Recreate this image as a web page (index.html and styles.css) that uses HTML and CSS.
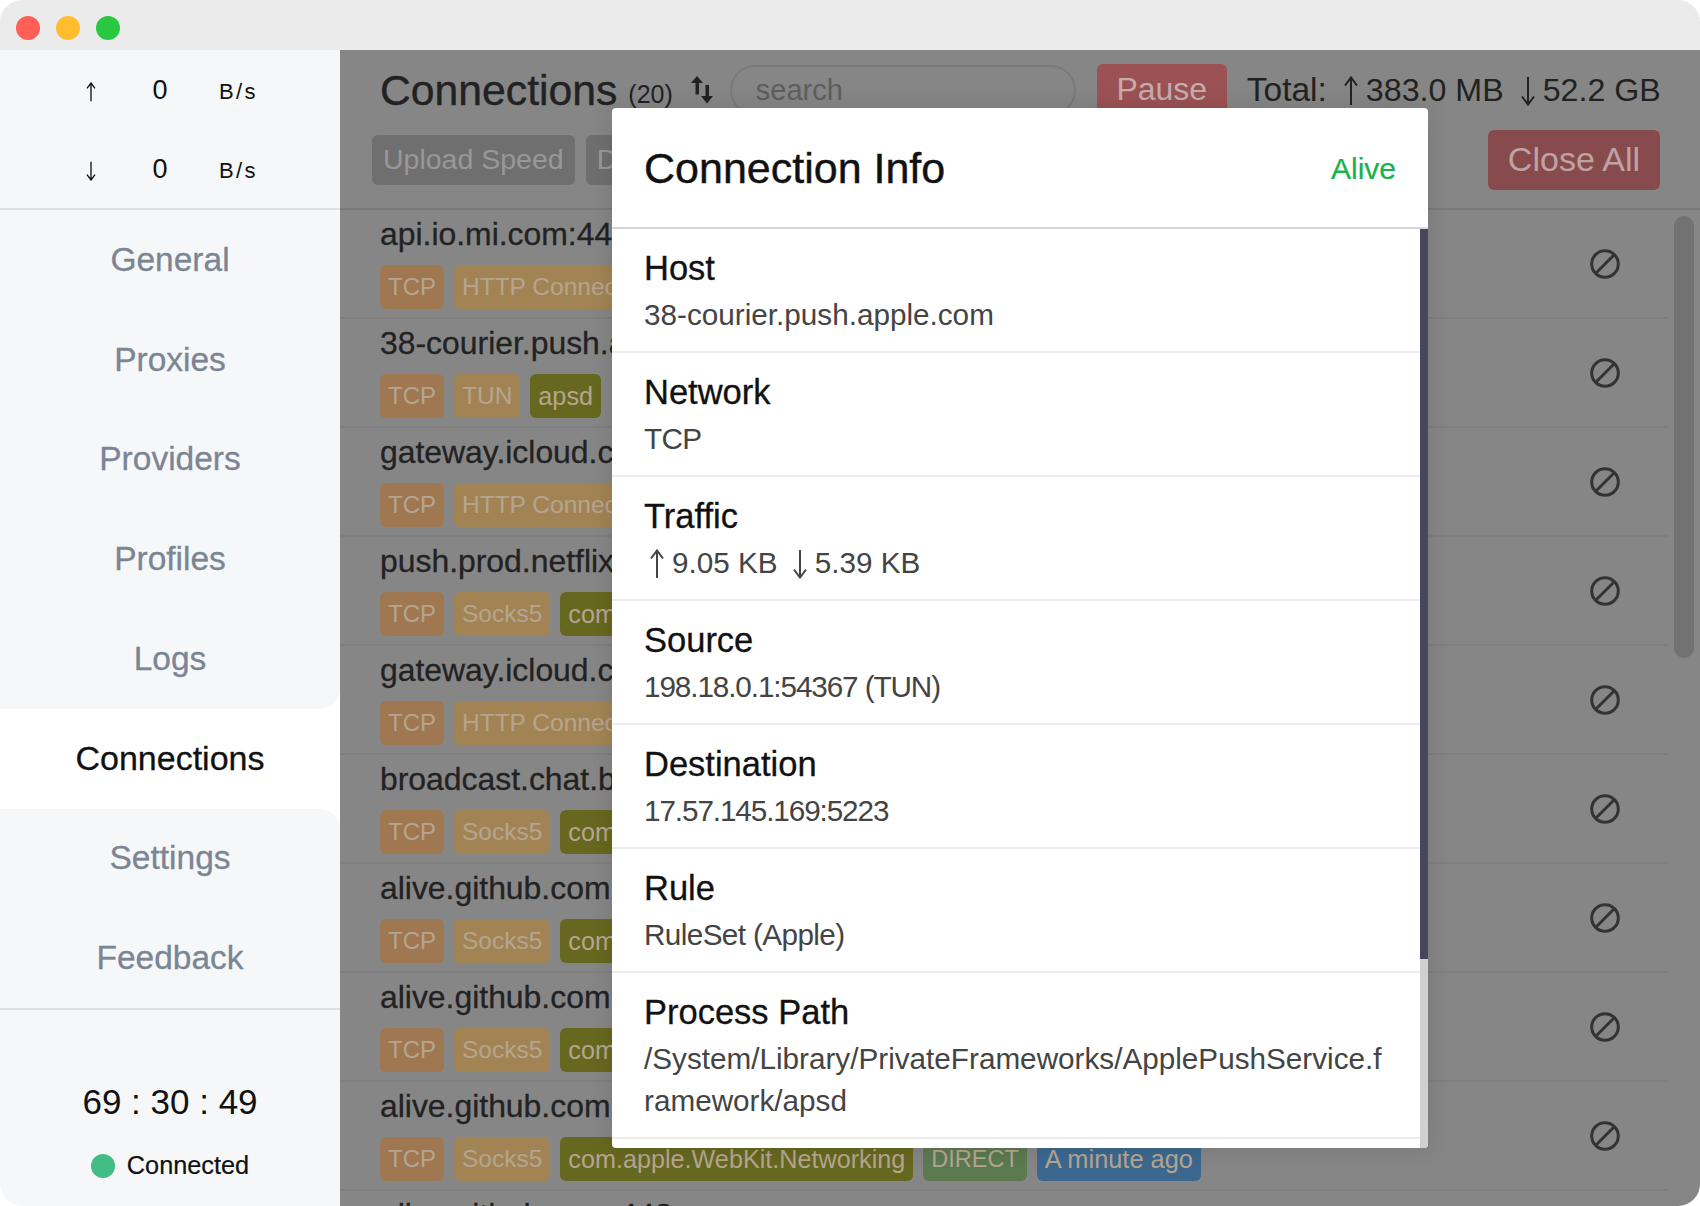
FILE: index.html
```html
<!DOCTYPE html>
<html lang="en">
<head>
<meta charset="utf-8">
<title>Connections</title>
<link rel="stylesheet" href="styles.css">
</head>
<body>
<svg class="defs" width="0" height="0" aria-hidden="true">
  <symbol id="up" viewBox="0 0 14 30"><path d="M7 29V2M1 9.500 7 1.500l6 8" fill="none" stroke="currentColor" stroke-width="2"/></symbol>
  <symbol id="down" viewBox="0 0 14 30"><path d="M7 1v27M1 20.500l6 8 6-8" fill="none" stroke="currentColor" stroke-width="2"/></symbol>
  <symbol id="ban" viewBox="0 0 30 30"><circle cx="15" cy="15" r="13.300" fill="none" stroke="currentColor" stroke-width="3"/><path d="M6 24 24 6" fill="none" stroke="currentColor" stroke-width="3"/></symbol>
</svg>
<div class="window">
  <header class="titlebar">
    <span class="light red"></span><span class="light yellow"></span><span class="light green"></span>
  </header>
  <div class="body">
    <aside class="sidebar">
      <div class="speeds">
        <div class="speed"><svg class="side-arrow"><use href="#up"/></svg><span class="val">0</span><span class="unit">B/s</span></div>
        <div class="speed"><svg class="side-arrow"><use href="#down"/></svg><span class="val">0</span><span class="unit">B/s</span></div>
      </div>
      <nav class="nav">
        <a class="item">General</a>
        <a class="item">Proxies</a>
        <a class="item">Providers</a>
        <a class="item">Profiles</a>
        <a class="item before-active">Logs</a>
        <a class="item active">Connections</a>
        <a class="item after-active">Settings</a>
        <a class="item">Feedback</a>
      </nav>
      <div class="status">
        <div class="clock">69 : 30 : 49</div>
        <div class="conn"><span class="dot"></span>Connected</div>
      </div>
    </aside>
    <main class="main">
      <div class="head">
        <div class="head-top">
          <h1 class="title">Connections</h1><span class="count">(20)</span>
          <svg class="sort" viewBox="0 0 22 28" width="22" height="28"><path fill="#222" d="M6 0l6 7H8v11.500H4.500V7H0z"/><path fill="#222" d="M14.500 9H18v11h4l-6 7.500-6-7.500h4.500z"/></svg>
          <div class="search">search</div>
          <div class="pause">Pause</div>
          <div class="total"><span class="total-label">Total:</span><svg class="arr"><use href="#up"/></svg>383.0 MB<svg class="arr"><use href="#down"/></svg>52.2 GB</div>
        </div>
        <div class="head-bottom">
          <div class="filter">Upload Speed</div>
          <div class="filter">Download Speed</div>
          <div class="closeall">Close All</div>
        </div>
      </div>
      <div class="list">
        <div class="row"><div class="row-body"><div class="host">api.io.mi.com:443</div><div class="tags"><span class="tag o">TCP</span><span class="tag y">HTTP Connect</span></div></div><svg class="ban"><use href="#ban"/></svg></div>
        <div class="row"><div class="row-body"><div class="host">38-courier.push.apple.com:5223</div><div class="tags"><span class="tag o">TCP</span><span class="tag y">TUN</span><span class="tag l">apsd</span></div></div><svg class="ban"><use href="#ban"/></svg></div>
        <div class="row"><div class="row-body"><div class="host">gateway.icloud.com:443</div><div class="tags"><span class="tag o">TCP</span><span class="tag y">HTTP Connect</span></div></div><svg class="ban"><use href="#ban"/></svg></div>
        <div class="row"><div class="row-body"><div class="host">push.prod.netflix.com:443</div><div class="tags"><span class="tag o">TCP</span><span class="tag y">Socks5</span><span class="tag l">com.apple.WebKit</span></div></div><svg class="ban"><use href="#ban"/></svg></div>
        <div class="row"><div class="row-body"><div class="host">gateway.icloud.com:443</div><div class="tags"><span class="tag o">TCP</span><span class="tag y">HTTP Connect</span></div></div><svg class="ban"><use href="#ban"/></svg></div>
        <div class="row"><div class="row-body"><div class="host">broadcast.chat.bilibili.com:443</div><div class="tags"><span class="tag o">TCP</span><span class="tag y">Socks5</span><span class="tag l">com.apple.WebKit</span></div></div><svg class="ban"><use href="#ban"/></svg></div>
        <div class="row"><div class="row-body"><div class="host">alive.github.com:443</div><div class="tags"><span class="tag o">TCP</span><span class="tag y">Socks5</span><span class="tag l">com.apple.WebKit</span></div></div><svg class="ban"><use href="#ban"/></svg></div>
        <div class="row"><div class="row-body"><div class="host">alive.github.com:443</div><div class="tags"><span class="tag o">TCP</span><span class="tag y">Socks5</span><span class="tag l">com.apple.WebKit</span></div></div><svg class="ban"><use href="#ban"/></svg></div>
        <div class="row"><div class="row-body"><div class="host">alive.github.com:443</div><div class="tags"><span class="tag o">TCP</span><span class="tag y">Socks5</span><span class="tag l">com.apple.WebKit.Networking</span><span class="tag g">DIRECT</span><span class="tag b">A minute ago</span></div></div><svg class="ban"><use href="#ban"/></svg></div>
        <div class="row"><div class="row-body"><div class="host">alive.github.com:443</div></div></div>
      </div>
      <div class="thumb"></div>
    </main>
  </div>
  <section class="modal">
    <div class="modal-head"><h2 class="modal-title">Connection Info</h2><span class="alive">Alive</span></div>
    <div class="modal-body">
      <div class="modal-scroll">
        <div class="info"><div class="k">Host</div><div class="v">38-courier.push.apple.com</div></div>
        <div class="info"><div class="k">Network</div><div class="v tight">TCP</div></div>
        <div class="info"><div class="k">Traffic</div><div class="v traffic"><svg class="arr small"><use href="#up"/></svg>9.05 KB<svg class="arr small"><use href="#down"/></svg>5.39 KB</div></div>
        <div class="info"><div class="k">Source</div><div class="v num">198.18.0.1:54367 (TUN)</div></div>
        <div class="info"><div class="k">Destination</div><div class="v num">17.57.145.169:5223</div></div>
        <div class="info"><div class="k">Rule</div><div class="v tight">RuleSet (Apple)</div></div>
        <div class="info"><div class="k">Process Path</div><div class="v">/System/Library/PrivateFrameworks/ApplePushService.framework/apsd</div></div>
      </div>
      <div class="modal-bar"><div class="modal-thumb"></div></div>
    </div>
  </section>
</div>
</body>
</html>
```
FILE: styles.css
```css
* { box-sizing: border-box; }
html, body { margin: 0; height: 100%; background: #fff; }
body { font-family: "Liberation Sans", Arial, sans-serif; overflow: hidden; }
.defs { position: absolute; }
.window { position: relative; width: 1700px; height: 1206px; border-radius: 22px; overflow: hidden; background: #f6f7f8; }
.titlebar { height: 50px; background: #ebebeb; display: flex; align-items: center; gap: 16px; padding: 6px 0 0 16px; }
.light { width: 24px; height: 24px; border-radius: 50%; }
.red { background: #ff5f57; }
.yellow { background: #ffbd2e; }
.green { background: #28c940; }
.body { display: flex; height: 1156px; }

.sidebar { width: 340px; flex: none; display: flex; flex-direction: column; background: #fff; }
.speeds { height: 160px; padding-top: 2px; background: #f6f7f8; border-bottom: 2px solid #dfdfdf; }
.speed { height: 79px; display: grid; grid-template-columns: 100px 38px 1fr; align-items: center; padding-left: 41px; font-size: 27px; color: #111; }
.side-arrow { width: 10px; height: 20px; justify-self: center; color: #111; }
.val { text-align: center; margin-top: -3px; }
.unit { font-size: 22px; letter-spacing: 2.300px; padding-left: 40px; }
.nav { flex: none; display: flex; flex-direction: column; background: #fff; }
.item { height: 99.750px; display: flex; align-items: center; justify-content: center; font-size: 33.500px; color: #7b8594; background: #f6f7f8; -webkit-text-stroke: .3px currentColor; }
.before-active { border-bottom-right-radius: 20px; }
.after-active { border-top-right-radius: 20px; }
.active { background: #fff; color: #111; font-size: 34px; }
.status { flex: 1; background: #f6f7f8; border-top: 2px solid #dfdfdf; display: flex; flex-direction: column; align-items: center; }
.clock { margin-top: 72px; font-size: 35px; color: #111; }
.conn { margin-top: 29px; display: flex; align-items: center; gap: 12px; font-size: 25.300px; color: #111; -webkit-text-stroke: .2px currentColor; }
.dot { width: 24px; height: 24px; border-radius: 50%; background: #41bd85; }

.main { position: relative; flex: 1; background: #868686; overflow: hidden; }
.head { height: 160px; padding: 0 40px 0 32px; border-bottom: 2px solid #797979; }
.head-top { display: flex; align-items: center; height: 80px; padding-left: 8px; color: #222; }
.title { margin: 0; font-size: 42.700px; font-weight: 400; color: #222; -webkit-text-stroke: .4px currentColor; }
.count { font-size: 25px; margin: 8px 0 0 11px; }
.sort { margin: 0 0 0 18px; flex: none; }
.search { width: 346px; height: 50px; margin-left: 17px; border: 2px solid #7a7a7a; border-radius: 25px; padding: 0 24px; font-size: 29px; line-height: 46px; color: #5e5e5e; flex: none; }
.pause { margin-left: 21px; width: 130px; height: 52px; border-radius: 6px; background: #9c5254; color: #c6adad; font-size: 32px; line-height: 50px; text-align: center; flex: none; }
.total { margin-left: 20px; font-size: 32.200px; color: #222; white-space: nowrap; }
.total-label { font-size: 33.500px; }
.arr { width: 14px; height: 32px; vertical-align: -6px; margin: 0 8px 0 17px; }
.arr.small { width: 14px; height: 30px; margin-left: 15px; }
.head-bottom { display: flex; align-items: center; gap: 11px; height: 60px; }
.filter { height: 50px; border-radius: 6px; background: #6f6f6f; color: #989898; font-size: 28.500px; line-height: 48px; padding: 0 11px; white-space: nowrap; }
.closeall { margin-left: auto; height: 60px; width: 172px; border-radius: 6px; background: #884b4d; color: #bfa3a3; font-size: 34px; line-height: 58px; text-align: center; }
.list { padding-right: 32px; }
.row { display: flex; align-items: center; justify-content: space-between; height: 109px; padding-left: 40px; border-bottom: 2px solid #7f7f7f; }
.row-body { min-width: 0; align-self: flex-start; padding-top: 6px; }
.host { font-size: 31.900px; line-height: 36px; color: #222; margin-bottom: 13px; white-space: nowrap; -webkit-text-stroke: .3px currentColor; }
.tags { display: flex; gap: 10px; }
.tag { height: 44px; padding: 0 8px; border-radius: 6px; font-size: 24.500px; line-height: 44px; color: #b5a590; white-space: nowrap; }
.o { background: #9f7750; font-size: 24px; }
.y { background: #a28454; }
.l { background: #66681f; font-size: 25.200px; }
.g { background: #5b7a50; font-size: 23.500px; }
.b { background: #3c6890; font-size: 25.400px; }
.ban { width: 30px; height: 30px; margin-right: 48px; color: #333; flex: none; }
.thumb { position: absolute; left: 1334px; top: 166px; width: 20px; height: 442px; border-radius: 10px; background: #727272; }

.modal { position: absolute; left: 612px; top: 108px; width: 816px; height: 1040px; background: #fff; border-radius: 4px; display: flex; flex-direction: column; overflow: hidden; box-shadow: 0 0 24px rgba(0, 0, 0, .12); }
.modal-head { height: 121px; flex: none; display: flex; align-items: center; justify-content: space-between; padding: 2px 32px 0; border-bottom: 2px solid #d8d8dc; }
.modal-title { margin: 0; font-size: 43px; font-weight: 400; color: #111; -webkit-text-stroke: .4px currentColor; }
.alive { font-size: 30px; color: #16b24a; -webkit-text-stroke: .2px currentColor; }
.modal-body { position: relative; flex: 1; display: flex; min-height: 0; }
.modal-scroll { flex: 1; min-width: 0; overflow: hidden; }
.modal-bar { width: 8px; flex: none; background: #d0d0d0; }
.modal-thumb { height: 730px; background: #46465e; }
.info { padding: 17px 32px 15px; border-bottom: 2px solid #ececec; }
.k { font-size: 34.500px; line-height: 44px; color: #111; -webkit-text-stroke: .3px currentColor; }
.v { margin-top: 4px; font-size: 29.700px; line-height: 42px; color: #444; word-break: break-all; }
.num { letter-spacing: -1.100px; }
.tight { letter-spacing: -.6px; }
.traffic .arr:first-child { margin-left: 6px; }
```
